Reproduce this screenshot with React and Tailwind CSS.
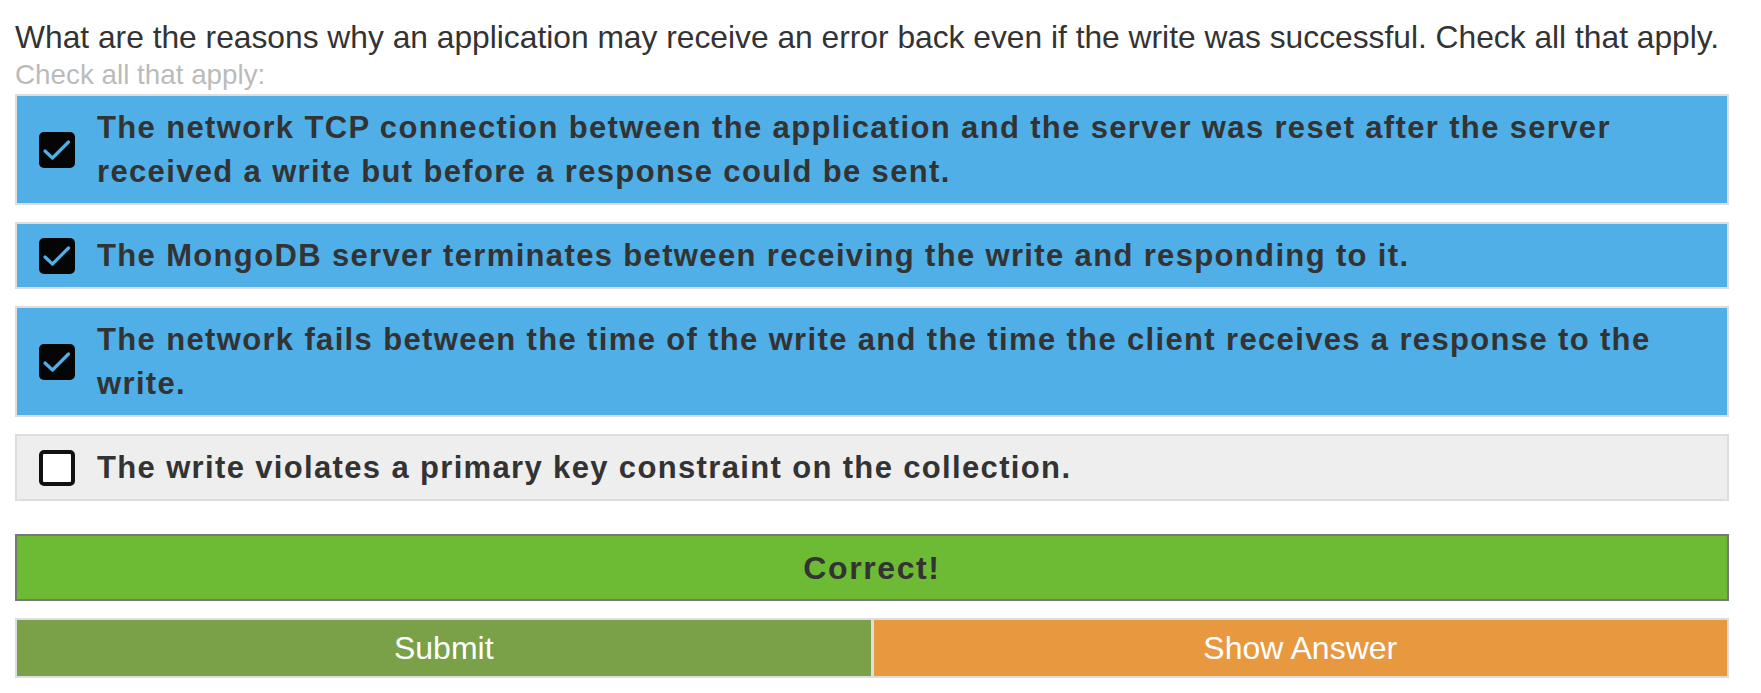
const options = [
  {
    text: 'The network TCP connection between the application and the server was reset after the server received a write but before a response could be sent.',
    checked: true,
  },
  { text: 'The MongoDB server terminates between receiving the write and responding to it.', checked: true },
  {
    text: 'The network fails between the time of the write and the time the client receives a response to the write.',
    checked: true,
  },
  { text: 'The write violates a primary key constraint on the collection.', checked: false },
];

function Box({ checked }) {
  if (!checked) {
    return <div className="w-[36px] h-[36px] shrink-0 rounded-[5px] border-4 border-[#111] bg-white" />;
  }
  return (
    <div className="w-[36px] h-[36px] shrink-0 rounded-[5px] bg-[#050505] flex items-center justify-center">
      <svg width="36" height="36" viewBox="0 0 36 36" fill="none">
        <path d="M6 19l7.5 7L29.5 10" stroke="#4fafe6" strokeWidth="3.2" strokeLinecap="round" strokeLinejoin="round" />
      </svg>
    </div>
  );
}

export default function App() {
  return (
    <div className="bg-white min-h-screen font-['Helvetica_Neue','Liberation_Sans',Arial,sans-serif] text-[#333]">
      <div className="w-[1714px] ml-[15px] pt-[19px]">
        <p className="text-[31.75px] leading-[36px] font-light whitespace-nowrap">
          What are the reasons why an application may receive an error back even if the write was successful. Check all that apply.
        </p>
        <p className="text-[27.8px] leading-[39px] font-light text-[#bbb]">Check all that apply:</p>

        <div className="flex flex-col gap-[17px]">
          {options.map((o, i) => (
            <label
              key={i}
              className={`flex items-center border-2 border-[#ddd] pt-[10px] pb-[9px] pl-[22px] pr-4 ${o.checked ? 'bg-[#4fafe6]' : 'bg-[#eeeeee]'}`}
            >
              <Box checked={o.checked} />
              <span className="ml-[22px] text-[31px] tracking-[1.35px] leading-[44px] font-bold">{o.text}</span>
            </label>
          ))}
        </div>

        <div className="mt-[33px] h-[67px] border-2 border-[#777] bg-[#6dba35] flex items-center justify-center">
          <span className="text-[32px] tracking-[1.6px] font-bold">Correct!</span>
        </div>

        <div className="mt-[17px] h-[60px] border-2 border-[#ddd] flex">
          <button className="flex-1 bg-[#7aa048] text-white text-[32px] border-r-[3px] border-[#ddd]">Submit</button>
          <button className="flex-1 bg-[#e8983f] text-white text-[32px]">Show Answer</button>
        </div>
      </div>
    </div>
  );
}
